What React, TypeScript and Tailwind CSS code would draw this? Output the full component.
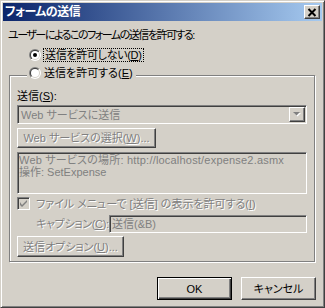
import React from "react";

const font = "[font-family:'Liberation_Sans','Noto_Sans_CJK_JP',sans-serif] [font-feature-settings:'palt']";
const raised = "border border-t-white border-l-white border-r-[#404040] border-b-[#404040] shadow-[inset_-1px_-1px_0_#808080]";
const sunken = "border border-t-[#808080] border-l-[#808080] border-r-white border-b-white shadow-[inset_1px_1px_0_#404040]";
const disabledText = "text-[#808080] [text-shadow:1px_1px_0_#fff]";

function Radio({ checked }: { checked?: boolean }) {
  return (
    <svg width="12" height="12" viewBox="0 0 12 12" className="shrink-0">
      <defs>
        <linearGradient id="ro" x1="0" y1="0" x2="1" y2="1">
          <stop offset="0.5" stopColor="#808080" />
          <stop offset="0.5" stopColor="#ffffff" />
        </linearGradient>
        <linearGradient id="ri" x1="0" y1="0" x2="1" y2="1">
          <stop offset="0.5" stopColor="#404040" />
          <stop offset="0.5" stopColor="#d4d0c8" />
        </linearGradient>
      </defs>
      <circle cx="6" cy="6" r="6" fill="url(#ro)" />
      <circle cx="6" cy="6" r="5" fill="url(#ri)" />
      <circle cx="6" cy="6" r="4" fill="#fff" />
      {checked && <circle cx="6" cy="6" r="2" fill="#000" />}
    </svg>
  );
}

function Mn({ k }: { k: string }) {
  return <span className="underline underline-offset-[1px]">{k}</span>;
}

function Button({ w, children, isDefault }: { w: string; children: React.ReactNode; isDefault?: boolean }) {
  const frame = isDefault
    ? "border border-black shadow-[inset_1px_1px_0_#fff,inset_-1px_-1px_0_#404040,inset_-2px_-2px_0_#808080]"
    : raised;
  return <div className={`${w} flex items-center justify-center whitespace-nowrap ${frame}`}>{children}</div>;
}

export default function App() {
  return (
    <div className={`w-[325px] h-[308px] bg-[#d4d0c8] p-[2px] border border-t-[#d4d0c8] border-l-[#d4d0c8] border-r-[#404040] border-b-[#404040] shadow-[inset_1px_1px_0_#fff,inset_-1px_-1px_0_#808080] text-[11px] leading-[14px] text-black whitespace-nowrap ${font}`}>
      {/* Title bar */}
      <div className="h-[18px] flex items-center justify-between pl-[2px] pr-[2px] bg-[linear-gradient(to_right,#0a246a,#a6caf0)]">
        <span className="font-bold text-[12px] text-white tracking-[-0.5px]">フォームの送信</span>
        <div className={`w-[16px] h-[14px] bg-[#d4d0c8] flex items-center justify-center ${raised}`}>
          <svg width="10" height="9" viewBox="0 0 10 9">
            <path d="M1.5 1 L8.5 8 M8.5 1 L1.5 8" stroke="#000" strokeWidth="2" />
          </svg>
        </div>
      </div>

      {/* Body */}
      <div className="flex flex-col pt-[7px]">
        <div className="ml-[5px] h-[14px] tracking-[-1.5px]">ユーザーによるこのフォームの送信を許可する:</div>

        <div className="ml-[26px] mt-[6px] h-[14px] flex items-center gap-[2px]">
          <Radio checked />
          <span className="border border-dotted border-black px-[1px] leading-[12px] tracking-[-0.3px]">
            送信を許可しない(<Mn k="D" />)
          </span>
        </div>

        <div className="ml-[6px] mt-[13px] w-[306px] h-[187px] border border-[#808080] shadow-[inset_1px_1px_0_#fff,1px_1px_0_#fff] flex flex-col pl-[7px]">
          <div className="-mt-[10px] ml-[10px] self-start h-[14px] flex items-center gap-[3px] bg-[#d4d0c8] pl-[2px] pr-[3px]">
            <Radio />
            <span>送信を許可する(<Mn k="E" />)</span>
          </div>

          <div className="mt-[9px] h-[14px]">送信(<Mn k="S" />):</div>

          <div className={`mt-[2px] w-[290px] h-[19px] flex items-center ${sunken}`}>
            <span className="flex-1 pl-[3px] text-[#808080]">Web サービスに送信</span>
            <div className={`w-[16px] h-[15px] mr-[1px] bg-[#d4d0c8] flex items-center justify-center ${raised}`}>
              <svg width="8" height="5" viewBox="0 0 8 5">
                <path d="M1 1 H8 L4.5 4.5 Z" fill="#fff" />
                <path d="M0 0 H7 L3.5 3.5 Z" fill="#808080" />
              </svg>
            </div>
          </div>

          <div className="mt-[4px]">
            <Button w="w-[139px] h-[20px]">
              <span className={disabledText}>Web サービスの選択(<Mn k="W" />)...</span>
            </Button>
          </div>

          <div className={`mt-[4px] w-[290px] h-[42px] pt-[1px] pl-[1px] leading-[12px] text-[#808080] ${sunken}`}>
            <div className="tracking-[0.2px]">Web サービスの場所: http://localhost/expense2.asmx</div>
            <div>操作: SetExpense</div>
          </div>

          <div className="mt-[3px] h-[13px] flex items-center gap-[6px]">
            <div className={`w-[13px] h-[13px] shrink-0 bg-[#d4d0c8] flex items-center justify-center ${sunken}`}>
              <svg width="7" height="7" viewBox="0 0 7 7">
                <path d="M0 2 L0 5 L2 7 L7 2 L7 0 L2 5 Z" fill="#808080" />
              </svg>
            </div>
            <span className={disabledText}>
              ファイル メニューで [送信] の表示を許可する(<Mn k="I" />)
            </span>
          </div>

          <div className="mt-[5px] ml-[19px] h-[18px] flex items-center justify-between w-[271px]">
            <span className={`tracking-[-0.3px] ${disabledText}`}>キャプション(<Mn k="C" />):</span>
            <div className={`w-[198px] h-[18px] flex items-center pl-[2px] text-[#808080] ${sunken}`}>送信(&amp;B)</div>
          </div>

          <div className="mt-[3px]">
            <Button w="w-[107px] h-[21px]">
              <span className={disabledText}>送信オプション(<Mn k="U" />)...</span>
            </Button>
          </div>
        </div>

        <div className="mt-[15px] mr-[6px] flex justify-end gap-[9px]">
          <Button w="w-[75px] h-[23px]" isDefault>
            OK
          </Button>
          <Button w="w-[75px] h-[23px]">キャンセル</Button>
        </div>
      </div>
    </div>
  );
}
